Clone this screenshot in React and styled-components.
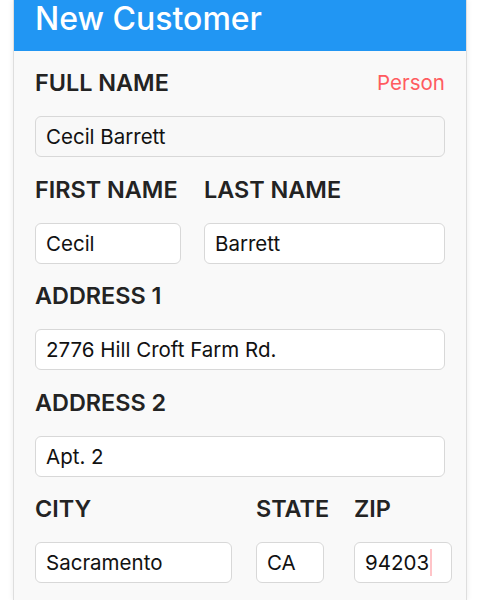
import styled, { createGlobalStyle } from "styled-components";

const GlobalStyle = createGlobalStyle`
  html, body {
    margin: 0;
    padding: 0;
    background: #ffffff;
    overflow: hidden;
  }
  * {
    box-sizing: border-box;
  }
`;

const App = () => {
  return (
    <Page>
      <GlobalStyle />
      <Card>
        <Header>New Customer</Header>
        <Form>
          <Field>
            <LabelRow>
              <Label>FULL NAME</Label>
              <Tag>Person</Tag>
            </LabelRow>
            <Input readOnly disabled value="Cecil Barrett" />
          </Field>

          <Row>
            <Field width="146px">
              <Label>FIRST NAME</Label>
              <Input readOnly value="Cecil" />
            </Field>
            <Field grow>
              <Label>LAST NAME</Label>
              <Input readOnly value="Barrett" />
            </Field>
          </Row>

          <Field>
            <Label>ADDRESS 1</Label>
            <Input readOnly value="2776 Hill Croft Farm Rd." />
          </Field>

          <Field>
            <Label>ADDRESS 2</Label>
            <Input readOnly value="Apt. 2" />
          </Field>

          <Row gap="24px">
            <Field width="197px">
              <Label>CITY</Label>
              <Input readOnly value="Sacramento" />
            </Field>
            <Field width="68px">
              <Label>STATE</Label>
              <Input readOnly value="CA" />
            </Field>
            <Field width="98px" style={{ marginLeft: 6 }}>
              <Label>ZIP</Label>
              <ZipBox>
                <ZipText>94203</ZipText>
                <Caret />
              </ZipBox>
            </Field>
          </Row>
        </Form>
      </Card>
    </Page>
  );
};

export default App;

const Page = styled.div`
  width: 480px;
  height: 600px;
  overflow: hidden;
  padding: 0 13px;
  font-family: Inter, "Noto Sans", sans-serif;
`;

const Card = styled.div`
  width: 454px;
  height: 600px;
  background: #f9f9f9;
  border-left: 1px solid #dedede;
  border-right: 1px solid #dedede;
  box-shadow: 0 0 6px rgba(0, 0, 0, 0.08);
`;

const Header = styled.div`
  height: 51px;
  background: #2196f3;
  color: #ffffff;
  font-size: 32px;
  font-weight: 500;
  line-height: 37px;
  padding-left: 21px;
`;

const Form = styled.div`
  display: flex;
  flex-direction: column;
  gap: 17.5px;
  padding: 17px 21px 0 21px;
`;

const Row = styled.div`
  display: flex;
  gap: ${({ gap }) => gap || "23px"};
`;

const Field = styled.div`
  display: flex;
  flex-direction: column;
  gap: 18px;
  width: ${({ width }) => width || "auto"};
  flex: ${({ grow }) => (grow ? 1 : "none")};
`;

const LabelRow = styled.div`
  display: flex;
  justify-content: space-between;
  align-items: center;
`;

const Label = styled.div`
  height: 30px;
  line-height: 30px;
  font-size: 23.4px;
  font-weight: 600;
  color: #232323;
  white-space: nowrap;
`;

const Tag = styled.div`
  font-size: 20.5px;
  color: #ff5b5f;
  line-height: 30px;
`;

const Input = styled.input`
  width: 100%;
  height: 41px;
  padding: 0 10px;
  border: 1px solid #d8d8d8;
  border-radius: 6px;
  background: ${({ disabled }) => (disabled ? "#f8f8f8" : "#ffffff")};
  font-family: Inter, "Noto Sans", sans-serif;
  font-size: 20.5px;
  color: #111111;
  outline: none;

  &:disabled {
    color: #111111;
    -webkit-text-fill-color: #111111;
    opacity: 1;
  }
`;

const ZipBox = styled.div`
  display: flex;
  align-items: center;
  height: 41px;
  padding: 0 10px;
  border: 1px solid #d8d8d8;
  border-radius: 6px;
  background: #ffffff;
`;

const ZipText = styled.span`
  font-size: 20.5px;
  color: #111111;
`;

const Caret = styled.span`
  width: 2px;
  height: 27px;
  margin-left: 1px;
  background: #ffc4c8;
`;
